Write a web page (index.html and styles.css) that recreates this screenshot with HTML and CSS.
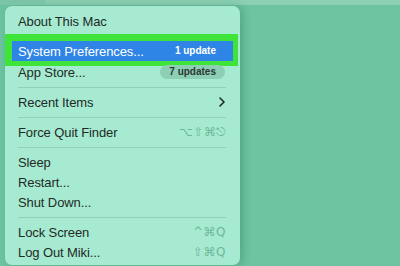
FILE: index.html
```html
<!DOCTYPE html>
<html>
<head>
<meta charset="utf-8">
<link rel="stylesheet" href="styles.css">
</head>
<body>
<div class="menubar"><div class="menubar-active"></div></div>
<div class="menu">
  <div class="row"><span class="label">About This Mac</span></div>
  <div class="sep"></div>
  <div class="row row-selected"><span class="label">System Preferences...</span><span class="pill pill-selected">1 update</span></div>
  <div class="row row-after"><span class="label">App Store...</span><span class="pill">7 updates</span></div>
  <div class="sep"><div class="line"></div></div>
  <div class="row"><span class="label">Recent Items</span>
    <svg class="chevron" width="6" height="10" viewBox="0 0 6 10"><path d="M1 1 L5 5 L1 9" fill="none" stroke="#1e2a25" stroke-width="1.6" stroke-linecap="round" stroke-linejoin="round"/></svg>
  </div>
  <div class="sep"><div class="line"></div></div>
  <div class="row"><span class="label">Force Quit Finder</span><span class="keys">⌥⇧⌘⎋</span></div>
  <div class="sep"><div class="line"></div></div>
  <div class="row"><span class="label">Sleep</span></div>
  <div class="row"><span class="label">Restart...</span></div>
  <div class="row"><span class="label">Shut Down...</span></div>
  <div class="sep"><div class="line"></div></div>
  <div class="row"><span class="label">Lock Screen</span><span class="keys">^⌘Q</span></div>
  <div class="row"><span class="label">Log Out Miki...</span><span class="keys">⇧⌘Q</span></div>
</div>
</body>
</html>
```
FILE: styles.css
```css
html, body {
  margin: 0;
  padding: 0;
}
body {
  width: 400px;
  height: 266px;
  overflow: hidden;
  background: #6cc4a1;
  font-family: "Liberation Sans", Arial, sans-serif;
  color: #1e2a25;
}
.menubar {
  height: 5px;
  background: #8dd1b5;
  display: flex;
}
.menubar-active {
  width: 45px;
  background: #7cc4a7;
}
.menu {
  margin-top: 1px;
  margin-left: 5px;
  width: 235px;
  height: 259px;
  box-sizing: border-box;
  padding-top: 5px;
  background: #a6ead1;
  border-radius: 7px;
  box-shadow: 3px 0 8px rgba(20, 90, 60, 0.28);
  display: flex;
  flex-direction: column;
}
.row {
  height: 20px;
  flex: none;
  display: flex;
  align-items: center;
  justify-content: space-between;
  padding: 0 14px 0 13px;
  font-size: 13px;
  letter-spacing: -0.1px;
}
.row-selected {
  margin: 0 7px;
  padding: 0 7px 0 6px;
  background: #2f85e6;
  color: #ffffff;
  box-shadow: -1px -1px 0 6px #3ee43a;
}
.row-after {
  height: 21px;
  padding-top: 1px;
  box-sizing: border-box;
}
.sep {
  height: 10px;
  flex: none;
  display: flex;
  align-items: center;
  padding: 0 14px 0 13px;
}
.line {
  flex: 1;
  height: 1px;
  background: #8ed3b9;
}
.pill {
  height: 14px;
  line-height: 14px;
  padding: 0 9px;
  border-radius: 7px;
  background: #8dcfb5;
  font-size: 10px;
  font-weight: bold;
  letter-spacing: 0;
  color: #2b3a33;
  margin-right: 1px;
}
.pill-selected {
  background: transparent;
  color: #ffffff;
}
.chevron {
  margin-right: 1px;
}
.keys {
  font-family: "DejaVu Sans", sans-serif;
  font-size: 12px;
  letter-spacing: 0.5px;
  color: #6cb898;
}
```
